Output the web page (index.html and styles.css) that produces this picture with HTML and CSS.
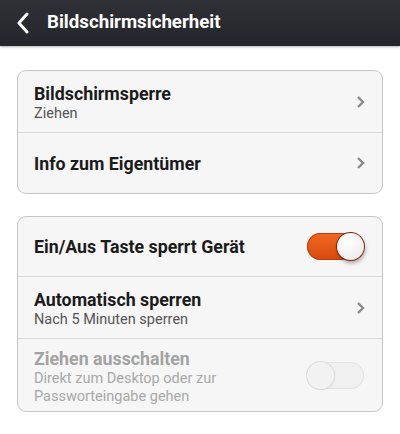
FILE: index.html
```html
<!DOCTYPE html>
<html>
<head>
<meta charset="utf-8">
<link rel="stylesheet" href="styles.css">
</head>
<body>
<header class="bar">
  <svg class="back" width="14" height="22" viewBox="0 0 14 22"><path d="M11 2 L3 11 L11 20" fill="none" stroke="#fff" stroke-width="3" stroke-linecap="round" stroke-linejoin="round"/></svg>
  <span class="bar-title">Bildschirmsicherheit</span>
</header>
<main class="content">
  <section class="card">
    <div class="row r1">
      <div class="text"><div class="title">Bildschirmsperre</div><div class="sub">Ziehen</div></div>
      <svg class="chev" width="10" height="14" viewBox="0 0 10 14"><path d="M2 2 L7 7 L2 12" fill="none" stroke="#8a8a8a" stroke-width="2.4"/></svg>
    </div>
    <div class="row r2">
      <div class="text"><div class="title">Info zum Eigentümer</div></div>
      <svg class="chev" width="10" height="14" viewBox="0 0 10 14"><path d="M2 2 L7 7 L2 12" fill="none" stroke="#8a8a8a" stroke-width="2.4"/></svg>
    </div>
  </section>
  <section class="card">
    <div class="row r3">
      <div class="text"><div class="title">Ein/Aus Taste sperrt Gerät</div></div>
      <div class="toggle on"><div class="knob"></div></div>
    </div>
    <div class="row r4">
      <div class="text"><div class="title">Automatisch sperren</div><div class="sub">Nach 5 Minuten sperren</div></div>
      <svg class="chev" width="10" height="14" viewBox="0 0 10 14"><path d="M2 2 L7 7 L2 12" fill="none" stroke="#8a8a8a" stroke-width="2.4"/></svg>
    </div>
    <div class="row r5 disabled">
      <div class="text"><div class="title">Ziehen ausschalten</div><div class="sub">Direkt zum Desktop oder zur<br>Passworteingabe gehen</div></div>
      <div class="toggle off"><div class="knob"></div></div>
    </div>
  </section>
</main>
</body>
</html>
```
FILE: styles.css
```css
* { box-sizing: border-box; }
html, body { margin: 0; padding: 0; }
body {
  width: 400px;
  height: 434px;
  background: #ffffff;
  font-family: Roboto, "Noto Sans", sans-serif;
  overflow: hidden;
}
.bar {
  height: 46px;
  background: linear-gradient(#2f3036, #25262b);
  display: flex;
  align-items: center;
  padding-left: 16px;
  box-shadow: 0 1px 2px rgba(0,0,0,0.3);
}
.back { margin-right: 17px; margin-top: -1px; }
.bar-title {
  color: #fff;
  font-weight: bold;
  font-size: 18.7px;
  margin-top: -2px;
}
.content {
  padding: 24px 17px 0 17px;
  display: flex;
  flex-direction: column;
  gap: 22px;
}
.card {
  background: #f6f6f6;
  border: 1px solid #c6c6c6;
  border-radius: 9px;
}
.row {
  display: flex;
  align-items: center;
  justify-content: space-between;
  padding: 0 17px 0 16px;
  border-top: 1px solid #d8d8d8;
}
.row:first-child { border-top: none; }
.r1 { height: 61px; }
.r2 { height: 61px; }
.r3 { height: 59px; }
.r4 { height: 62px; }
.r5 { height: 73px; }
.title {
  font-size: 17.8px;
  font-weight: bold;
  color: #1b1b1b;
  line-height: 21px;
}
.sub {
  font-size: 14.5px;
  color: #555;
  line-height: 17px;
  margin-top: 1px;
}
.r1 .text, .r4 .text { margin-top: 1px; }
.r5 .text { margin-top: 3px; }
.r5 .sub { line-height: 18px; }
.disabled .title { color: #a3a3a3; }
.disabled .sub { color: #a8a8a8; }
.chev { margin-right: -1px; }
.toggle {
  width: 57px;
  height: 27px;
  border-radius: 14px;
  position: relative;
  margin-right: 1px;
}
.toggle.on {
  background: linear-gradient(#f06a22, #d9480e);
  box-shadow: inset 0 0 0 1px #b8400c;
}
.toggle.on .knob {
  position: absolute;
  right: 0;
  top: 0;
  width: 27px;
  height: 27px;
  border-radius: 50%;
  background: radial-gradient(circle at 40% 35%, #ffffff, #e6e6e6);
  box-shadow: 0 0 0 1px #7a2a10, 1px 3px 4px rgba(0,0,0,0.35);
}
.toggle.off {
  background: #f0f0f0;
  box-shadow: inset 0 0 0 1px #e2e2e2;
}
.toggle.off .knob {
  position: absolute;
  left: 0;
  top: 0;
  width: 27px;
  height: 27px;
  border-radius: 50%;
  background: #f2f2f2;
  box-shadow: 0 0 0 1px #dcdcdc, 1px 1px 2px rgba(0,0,0,0.08);
}
```
